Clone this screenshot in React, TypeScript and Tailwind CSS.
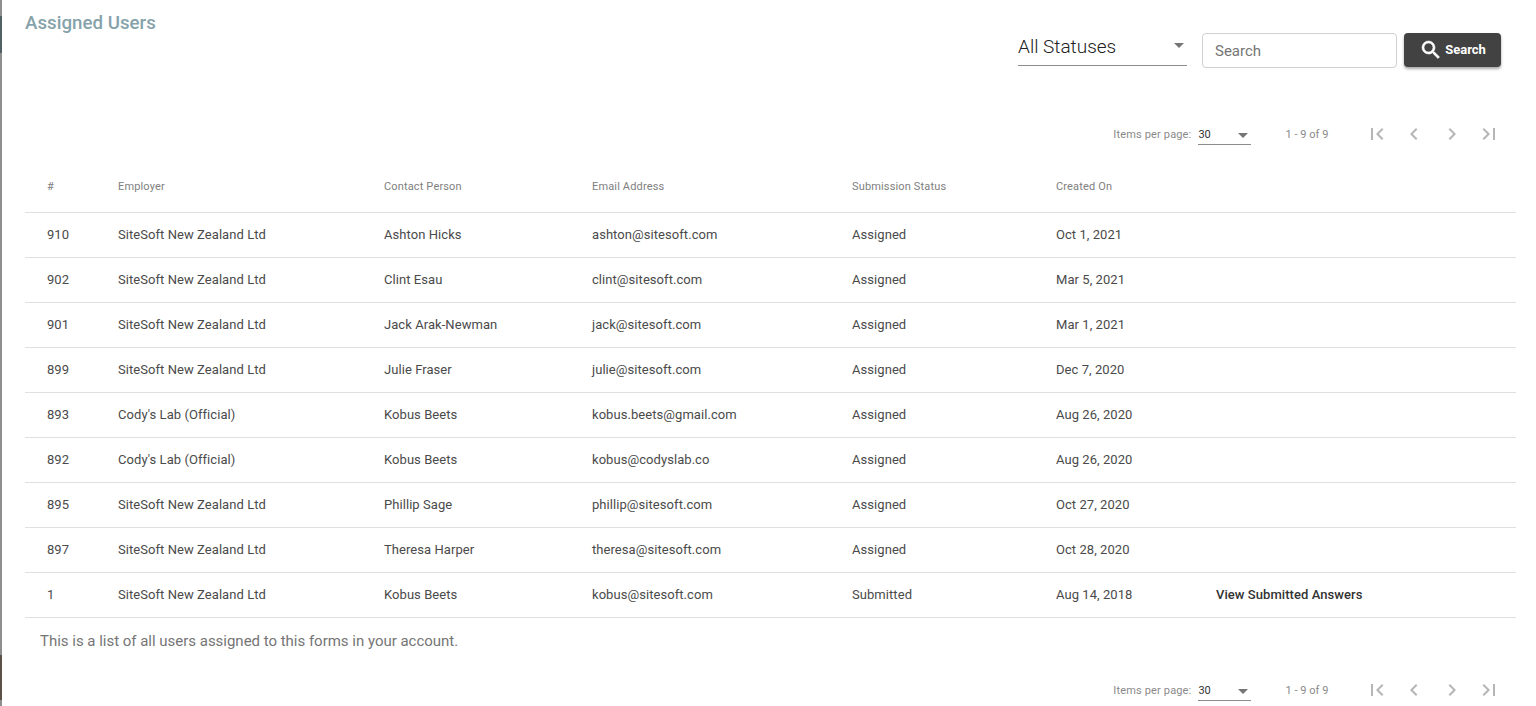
const rows = [
	["910", "SiteSoft New Zealand Ltd", "Ashton Hicks", "ashton@sitesoft.com", "Assigned", "Oct 1, 2021"],
	["902", "SiteSoft New Zealand Ltd", "Clint Esau", "clint@sitesoft.com", "Assigned", "Mar 5, 2021"],
	["901", "SiteSoft New Zealand Ltd", "Jack Arak-Newman", "jack@sitesoft.com", "Assigned", "Mar 1, 2021"],
	["899", "SiteSoft New Zealand Ltd", "Julie Fraser", "julie@sitesoft.com", "Assigned", "Dec 7, 2020"],
	["893", "Cody's Lab (Official)", "Kobus Beets", "kobus.beets@gmail.com", "Assigned", "Aug 26, 2020"],
	["892", "Cody's Lab (Official)", "Kobus Beets", "kobus@codyslab.co", "Assigned", "Aug 26, 2020"],
	["895", "SiteSoft New Zealand Ltd", "Phillip Sage", "phillip@sitesoft.com", "Assigned", "Oct 27, 2020"],
	["897", "SiteSoft New Zealand Ltd", "Theresa Harper", "theresa@sitesoft.com", "Assigned", "Oct 28, 2020"],
	["1", "SiteSoft New Zealand Ltd", "Kobus Beets", "kobus@sitesoft.com", "Submitted", "Aug 14, 2018"],
];

const headers = ["#", "Employer", "Contact Person", "Email Address", "Submission Status", "Created On", ""];
const columns = "grid shrink-0 grid-cols-[71px_266px_208px_260px_204px_160px_1fr] pl-[22px]";

function PagerIcon({ d }: { d: string }) {
	return (
		<svg viewBox="0 0 24 24" className="h-6 w-6 fill-[#b5b5b5]">
			<path d={d} />
		</svg>
	);
}

function Paginator({ className }: { className: string }) {
	return (
		<div className={`flex shrink-0 items-start justify-end pr-[15px] ${className}`}>
			<span className="mt-4 text-[11px] leading-[14px] tracking-[0.15px] text-[#8a8a8a]">Items per page:</span>
			<div className="ml-[7px] flex h-[33px] w-[53px] items-start justify-between border-b border-[#8c8c8c] pt-4 pr-[3px]">
				<span className="text-[11px] leading-[14px] text-[#333]">30</span>
				<span className="mt-[5px] h-0 w-0 border-x-[5px] border-t-[5px] border-x-transparent border-t-[#757575]" />
			</div>
			<span className="mt-4 ml-[34px] text-[11px] leading-[14px] tracking-[0.05px] text-[#8a8a8a]">1 - 9 of 9</span>
			<div className="ml-[36px] flex gap-[13.5px] pt-[10px]">
				<PagerIcon d="M18.41 16.59 13.82 12l4.59-4.59L17 6l-6 6 6 6 1.41-1.41zM6 6h2v12H6V6z" />
				<PagerIcon d="M15.41 7.41 14 6l-6 6 6 6 1.41-1.41L10.83 12l4.58-4.59z" />
				<PagerIcon d="M10 6 8.59 7.41 13.17 12l-4.58 4.59L10 18l6-6-6-6z" />
				<PagerIcon d="M5.59 7.41 10.18 12l-4.59 4.59L7 18l6-6-6-6-1.41 1.41zM16 6h2v12h-2V6z" />
			</div>
		</div>
	);
}

export default function App() {
	return (
		<div className="flex h-[706px] overflow-hidden bg-white font-['Roboto',sans-serif]">
			<div className="flex w-0.5 shrink-0 flex-col bg-[#8e8e8e]">
				<div className="mt-[16px] h-[37px] bg-[#4f6163]" />
				<div className="mt-[602px] h-[45px] bg-[#5d5248]" />
			</div>
			<main className="flex min-w-0 flex-1 flex-col pr-5 pl-[23px]">
				<div className="flex h-[112px] shrink-0 items-start justify-between">
					<h1 className="mt-[12px] text-[18.72px] leading-[22px] font-medium text-[#86a2aa]">Assigned Users</h1>
					<div className="mt-[33px] mr-[15px] flex items-start">
						<div className="flex h-[33px] w-[169px] items-start justify-between border-b border-[#8c8c8c] pr-[3px]">
							<span className="text-[19px] leading-[27px] font-light text-[#222]">All Statuses</span>
							<span className="mt-[10px] h-0 w-0 border-x-[5px] border-t-[5px] border-x-transparent border-t-[#757575]" />
						</div>
						<div className="ml-[15px] flex h-[35px] w-[195px] items-center rounded border border-[#d0d0d0] pt-0.5 pl-3 text-[15px] text-[#757575]">
							Search
						</div>
						<button className="ml-[7px] flex h-[34px] w-[97px] items-center justify-center gap-[2px] rounded bg-[#424242] text-[13px] font-bold text-white shadow-[0_2px_3px_rgba(0,0,0,0.35)]">
							<svg viewBox="0 0 24 24" className="h-[24px] w-[24px] fill-white stroke-white stroke-[0.6]">
								<path d="M15.5 14h-.79l-.28-.27A6.47 6.47 0 0 0 16 9.5 6.5 6.5 0 1 0 9.5 16c1.61 0 3.09-.59 4.23-1.57l.27.28v.79l5 4.99L20.49 19l-4.99-5zm-6 0C7.01 14 5 11.99 5 9.5S7.01 5 9.5 5 14 7.01 14 9.5 11.99 14 9.5 14z" />
							</svg>
							Search
						</button>
					</div>
				</div>
				<Paginator className="h-[38px]" />
				<div className={`${columns} h-[63px] items-center border-b border-[#e0e0e0] pt-[13px] text-[11px] tracking-[0.15px] text-[#808080]`}>
					{headers.map((h, i) => (
						<span key={i}>{h}</span>
					))}
				</div>
				{rows.map((row) => (
					<div key={row[0]} className={`${columns} h-[45px] items-center border-b border-[#e0e0e0] text-[13px] tracking-[0.06px] text-[#4a4a4a]`}>
						{row.map((cell, i) => (
							<span key={i}>{cell}</span>
						))}
						<span className="font-medium text-[#333]">{row[4] === "Submitted" ? "View Submitted Answers" : ""}</span>
					</div>
				))}
				<p className="mt-[14px] ml-[15px] shrink-0 text-[15px] leading-[18px] tracking-[-0.015px] text-[#757575]">
					This is a list of all users assigned to this forms in your account.
				</p>
				<Paginator className="mt-[18px] h-[33px]" />
			</main>
		</div>
	);
}
